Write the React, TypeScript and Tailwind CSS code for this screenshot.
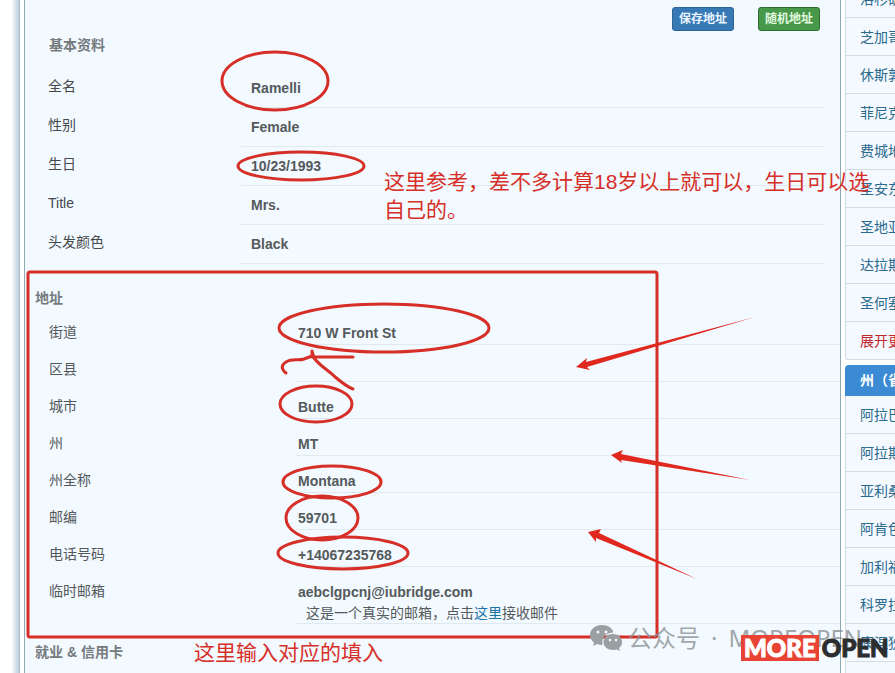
import React from 'react';

const basics = [
  { label: '全名', value: 'Ramelli' },
  { label: '性别', value: 'Female' },
  { label: '生日', value: '10/23/1993' },
  { label: 'Title', value: 'Mrs.' },
  { label: '头发颜色', value: 'Black' },
];

const address = [
  { label: '街道', value: '710 W Front St' },
  { label: '区县', value: '' },
  { label: '城市', value: 'Butte' },
  { label: '州', value: 'MT' },
  { label: '州全称', value: 'Montana' },
  { label: '邮编', value: '59701' },
  { label: '电话号码', value: '+14067235768' },
];

const cities = ['洛杉矶', '芝加哥', '休斯敦', '菲尼克斯', '费城地址', '圣安东尼奥', '圣地亚哥', '达拉斯', '圣何塞'];

const states = ['阿拉巴马', '阿拉斯加', '亚利桑那', '阿肯色州', '加利福尼亚', '科罗拉多', '康涅狄格', '特拉华'];

const circles = [
  { cx: 275, cy: 81, rx: 53, ry: 29 },
  { cx: 301, cy: 166, rx: 63, ry: 14 },
  { cx: 384, cy: 328, rx: 105, ry: 24 },
  { cx: 316, cy: 404, rx: 36, ry: 18 },
  { cx: 332, cy: 482, rx: 49, ry: 16 },
  { cx: 322, cy: 518, rx: 36, ry: 22 },
  { cx: 343, cy: 553, rx: 65, ry: 16 },
];

const SideLink = ({ text, red = false }: { text: string; red?: boolean }) => (
  <li className="border-b border-[#d3dce3]">
    <a href="#" className={`block h-[37px] pl-3.5 text-sm leading-[38px] ${red ? 'text-[#c0272d]' : 'text-[#2a6a8c]'}`}>
      {text}
    </a>
  </li>
);

const Sidebar = () => (
  <aside className="-mt-5 -mr-[190px] ml-1 w-60 shrink-0 whitespace-nowrap">
    <ul className="rounded-b border-l border-[#d3dce3] bg-[#f4f9ff]">
      {cities.map((city) => (
        <SideLink key={city} text={city} />
      ))}
      <SideLink text="展开更多" red />
    </ul>
    <h3 className="mt-[5px] h-[31px] rounded-t bg-[#3a8ad4] pl-[15px] text-sm font-bold leading-[31px] text-white">
      州（省）
    </h3>
    <ul className="border-l border-[#d3dce3] bg-[#f4f9ff]">
      {states.map((state) => (
        <SideLink key={state} text={state} />
      ))}
    </ul>
  </aside>
);

const BasicInfo = () => (
  <section className="mt-1 pl-[23px] pr-4">
    <h2 className="pl-px text-sm font-bold leading-5 text-[#757a7d]">基本资料</h2>
    <dl className="mt-3.5">
      {basics.map((row) => (
        <div key={row.label} className="flex h-[39px] text-sm leading-[38px]">
          <dt className="w-[193px] leading-[35px] text-[#45494c]">{row.label}</dt>
          <dd className="flex-1 border-b border-[#e0e9ee] pl-2.5 font-bold text-[#555a5c]">{row.value}</dd>
        </div>
      ))}
    </dl>
  </section>
);

const AddressInfo = () => (
  <section className="mt-6 pl-2.5">
    <h2 className="text-sm font-bold leading-5 text-[#757a7d]">地址</h2>
    <dl className="pl-3.5 text-sm leading-5">
      {address.map((row) => (
        <div key={row.label} className="flex h-[37px]">
          <dt className="w-[247px] pt-3.5 text-[#54585b]">{row.label}</dt>
          <dd className="flex-1 border-b border-[#e0e9ee] pl-0.5 pt-[15px] font-bold text-[#555a5c]">{row.value}</dd>
        </div>
      ))}
      <div className="flex">
        <dt className="w-[247px] pt-3.5 text-[#54585b]">临时邮箱</dt>
        <dd className="flex-1 border-b border-[#e0e9ee] pl-0.5 pt-[15px] text-[#555a5c]">
          <p className="font-bold">aebclgpcnj@iubridge.com</p>
          <p className="pl-2 pt-px">
            这是一个真实的邮箱，点击<a href="#" className="text-[#1b72a8]">这里</a>接收邮件
          </p>
        </dd>
      </div>
    </dl>
  </section>
);

// Red pen marks drawn over the form
const Marks = () => (
  <svg className="pointer-events-none absolute left-0 top-0" width="895" height="673" fill="none" stroke="#d62f28" strokeWidth="3">
    <rect x="28" y="272" width="629" height="365" rx="2" />
    {circles.map((c) => (
      <ellipse key={c.cy} {...c} />
    ))}
    <path
      d="M286 373 C281 369 281 365 286 362 C292 358 298 361 304 359 L312 356 L312 351 L314 358 C320 366 328 370 334 376 C341 382 347 387 353 389 M312 357 H353"
      strokeLinejoin="round"
      strokeLinecap="round"
    />
    <g fill="#e0281f" stroke="none">
      <path d="M576 367 L587 358 L586 362 L755 317 L587 367 L590 370 Z" />
      <path d="M611 455 L623 450 L621 454 L750 480 L621 460 L622 463 Z" />
      <path d="M588 532 L601 529 L599 533 L697 579 L596 538 L596 542 Z" />
    </g>
  </svg>
);

const Watermark = () => (
  <div className="absolute left-[590px] top-[624px] flex items-center text-[#8a8f93]/80">
    <svg width="32" height="28" viewBox="0 0 32 28" fill="#9a9fa2">
      <path d="M12 1 C5 1 0 5.500 0 11 C0 14 1.500 16.500 4 18.500 L3 22 L7 20 C9 20.700 10.500 21 12.500 21 C11 14 16 8.500 23.500 8.500 C22.500 4 18 1 12 1 Z" />
      <path d="M23 10 C17.500 10 13.500 13.500 13.500 18 C13.500 22.500 17.500 26 23 26 C24.300 26 25.500 25.800 26.500 25.400 L30 27 L29 24 C31 22.500 32 20.500 32 18 C32 13.500 28 10 23 10 Z" />
      <g fill="#f2f9ff">
        <circle cx="8" cy="8" r="1.500" />
        <circle cx="16" cy="8" r="1.500" />
        <circle cx="20" cy="16" r="1.300" />
        <circle cx="26" cy="16" r="1.300" />
      </g>
    </svg>
    <p className="ml-1.5 flex gap-[11px] whitespace-nowrap font-['Noto_Sans','Noto_Sans_CJK_SC',sans-serif] text-2xl leading-7">
      <span>公众号</span>
      <span>·</span>
      <span>MOREOPEN</span>
    </p>
  </div>
);

const App = () => {
  return (
    <div className="relative flex h-screen overflow-hidden bg-white font-['Liberation_Sans','Noto_Sans_CJK_SC',sans-serif]">
      <div className="w-5 shrink-0 border-r border-[#a9bfd0] bg-gradient-to-r from-white from-60% to-[#b9cddc]" />
      <main className="ml-1 min-w-0 flex-1 border-x border-[#8fa9b3] bg-[#f2f9ff] pt-[7px]">
        <div className="flex justify-end gap-6 pr-5">
          <button className="h-6 w-[62px] rounded-[3px] border border-[#2c6596] bg-[#3679b5] text-xs font-bold text-[#eaf5ff]">
            保存地址
          </button>
          <button className="h-6 w-[62px] rounded-[3px] border border-[#2f6b31] bg-[#48984a] text-xs font-bold text-[#e2fbe0]">
            随机地址
          </button>
        </div>
        <BasicInfo />
        <AddressInfo />
        <h2 className="mt-[18px] pl-2.5 text-sm font-bold leading-5 text-[#757a7d]">就业 &amp; 信用卡</h2>
      </main>
      <Sidebar />

      <Marks />
      <p className="absolute left-[384px] top-[168px] w-[490px] text-[21px] leading-7 text-[#d62f28]">
        这里参考，差不多计算18岁以上就可以，生日可以选自己的。
      </p>
      <p className="absolute left-[194px] top-[639px] text-[21px] leading-7 text-[#d62f28]">这里输入对应的填入</p>
      <Watermark />
      <p className="absolute left-[741px] top-[635px] flex font-['Lato',sans-serif] text-2xl font-black leading-[26px] [-webkit-text-stroke:1px]">
        <span className="bg-[#e94335] px-[3px] text-white">MORE</span>
        <span className="pl-[3px] text-[#2b2d2f]">OPEN</span>
      </p>
    </div>
  );
};

export default App;
